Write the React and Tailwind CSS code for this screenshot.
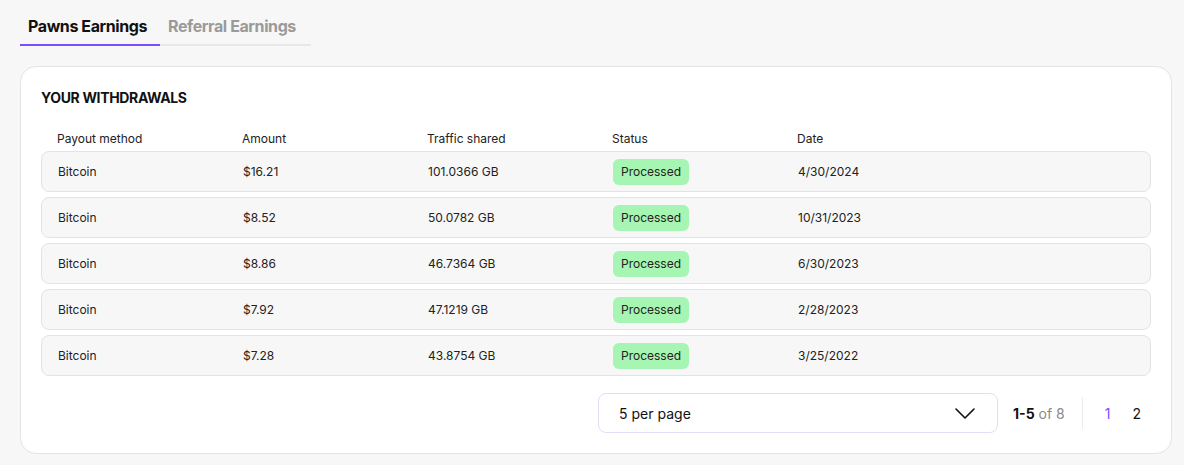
const rows = [
  { method: "Bitcoin", amount: "$16.21", traffic: "101.0366 GB", date: "4/30/2024" },
  { method: "Bitcoin", amount: "$8.52", traffic: "50.0782 GB", date: "10/31/2023" },
  { method: "Bitcoin", amount: "$8.86", traffic: "46.7364 GB", date: "6/30/2023" },
  { method: "Bitcoin", amount: "$7.92", traffic: "47.1219 GB", date: "2/28/2023" },
  { method: "Bitcoin", amount: "$7.28", traffic: "43.8754 GB", date: "3/25/2022" },
];

const cols = "grid grid-cols-[185px_185px_185px_185px_1fr] items-center";

function App() {
  return (
    <div
      className="min-h-[465px] bg-[#f7f7f7] pl-5 pr-3 pt-[14px] text-[#111]"
      style={{ fontFamily: "Inter, 'Noto Sans', sans-serif" }}
    >
      <div className="flex">
        <button className="w-[140px] border-b-2 border-[#7c4dff] pb-[6px] text-left pl-2 text-[16px] font-bold tracking-tight text-[#111]">
          Pawns Earnings
        </button>
        <button className="w-[151px] border-b-2 border-[#e8e8e8] pb-[6px] text-left pl-2 text-[16px] font-bold tracking-tight text-[#9a9a9a]">
          Referral Earnings
        </button>
      </div>

      <div className="mt-5 rounded-2xl border border-[#e3e3e3] bg-white px-5 pt-[20px] pb-[20px]">
        <h2 className="text-[14px] font-bold tracking-tight">YOUR WITHDRAWALS</h2>

        <div className={`${cols} mt-[22px] mb-[3px] pl-4 text-[12px] text-[#222]`}>
          <span>Payout method</span>
          <span>Amount</span>
          <span>Traffic shared</span>
          <span>Status</span>
          <span>Date</span>
        </div>

        <div className="flex flex-col gap-[5px]">
          {rows.map((r, i) => (
            <div
              key={i}
              className={`${cols} h-[41px] rounded-lg border border-[#e3e3e3] bg-[#f7f7f7] pl-4 text-[12px] text-[#222]`}
            >
              <span>{r.method}</span>
              <span>{r.amount}</span>
              <span>{r.traffic}</span>
              <span>
                <span className="inline-block rounded-md bg-[#a6f5b3] px-2 py-[4px] text-[12px]">
                  Processed
                </span>
              </span>
              <span>{r.date}</span>
            </div>
          ))}
        </div>

        <div className="mt-[17px] flex items-center justify-end">
          <div className="flex h-10 w-[400px] items-center justify-between rounded-lg border border-[#e2defa] pl-5 pr-[22px] text-[14px]">
            <span>5 per page</span>
            <svg width="20" height="11" viewBox="0 0 20 11" fill="none" stroke="#111" strokeWidth="1.6" strokeLinecap="round" strokeLinejoin="round">
              <polyline points="1,1 10,10 19,1" />
            </svg>
          </div>
          <div className="ml-[15px] text-[14px]">
            <span className="font-bold">1-5</span>{" "}
            <span className="text-[#8a8a8a]">of 8</span>
          </div>
          <div className="ml-[17px] h-8 w-px bg-[#ececec]" />
          <div className="ml-[22px] flex items-center gap-[22px] pr-[10px] text-[14px]">
            <span className="text-[#7c4dff]">1</span>
            <span>2</span>
          </div>
        </div>
      </div>
    </div>
  );
}

export default App;
